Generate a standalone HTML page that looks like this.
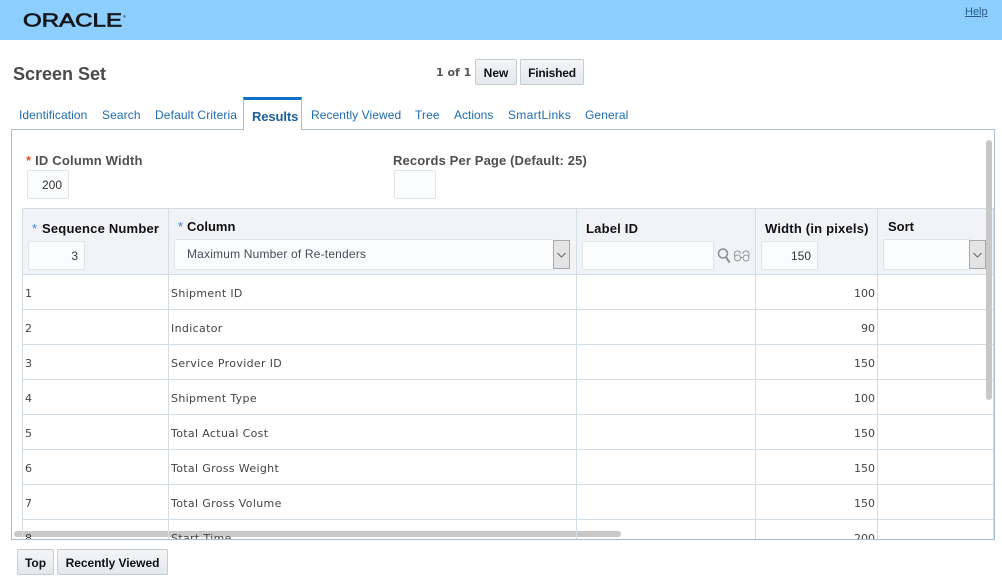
<!DOCTYPE html>
<html><head><meta charset="utf-8"><style>
html,body{margin:0;padding:0;width:1002px;height:579px;overflow:hidden;background:#fff;font-family:"Liberation Sans",Arial,sans-serif}
.a{position:absolute;white-space:nowrap}
.tab{position:absolute;top:108px;font-size:12px;line-height:15px;color:#1e6cb4;white-space:nowrap}
.btn{position:absolute;box-sizing:border-box;height:26px;line-height:26px;border:1px solid #c4ccd4;border-radius:2px;background:linear-gradient(#f4f5f7,#e4e8ec);font-size:12px;font-weight:bold;color:#111;text-align:center}
.lbl{font-size:13px;font-weight:bold;color:#4f4f4f;line-height:16px}
.inp{position:absolute;box-sizing:border-box;background:#fbfcfe;border:1px solid #e2e6ea;border-radius:2px;font-size:12px;color:#333;text-align:right;padding-right:6px;height:29px;line-height:28px}
.th{font-size:13px;font-weight:bold;color:#111;line-height:16px}
.star{color:#3b82e8;font-weight:normal}
.h{position:absolute;left:0;width:972px;height:1px;background:#d3dde6}
.v{position:absolute;width:1px;background:#d3dde6}
.c{position:absolute;font-family:"DejaVu Sans",Verdana,sans-serif;font-size:11px;line-height:14px;color:#444;white-space:nowrap}
.n{letter-spacing:.34px}
.sel{position:absolute;width:17px;height:29px;box-sizing:border-box;background:#e4e4e4;border:1px solid #a9a9a9}
</style></head><body>
<div class="a" style="left:0;top:0;width:1002px;height:40px;background:#8ccfff"></div>
<svg class="a" style="left:22px;top:10px" width="108" height="20"><text x="1" y="16.500" font-family="Liberation Sans" font-size="18.500" fill="#15161a" stroke="#15161a" stroke-width=".7" textLength="99" lengthAdjust="spacingAndGlyphs">ORACLE</text><text x="101" y="8" font-family="Liberation Sans" font-size="4" fill="#15161a">®</text></svg>
<div class="a" style="left:965px;top:6px;font-size:11px;line-height:13px;color:#2a5a8c;text-decoration:underline">Help</div>

<div class="a" style="left:13px;top:64px;font-size:18px;font-weight:bold;line-height:20px;color:#4a4a4a">Screen Set</div>
<div class="a" style="left:436px;top:66px;font-family:'DejaVu Sans',sans-serif;font-size:11px;font-weight:bold;line-height:14px;color:#555">1 of 1</div>
<div class="btn" style="left:475px;top:59px;width:42px">New</div>
<div class="btn" style="left:520px;top:59px;width:64px;letter-spacing:-.2px">Finished</div>

<div class="tab" style="left:19px;letter-spacing:.07px">Identification</div>
<div class="tab" style="left:102px;letter-spacing:.1px">Search</div>
<div class="tab" style="left:155px;letter-spacing:.13px">Default Criteria</div>
<div class="tab" style="left:311px;letter-spacing:.07px">Recently Viewed</div>
<div class="tab" style="left:415px;letter-spacing:.1px">Tree</div>
<div class="tab" style="left:454px">Actions</div>
<div class="tab" style="left:508px;letter-spacing:.3px">SmartLinks</div>
<div class="tab" style="left:585px;letter-spacing:.1px">General</div>

<div class="a" style="left:11px;top:129px;width:984px;height:411px;box-sizing:border-box;border:1px solid #a6bdd6;overflow:hidden;background:#fff">
  <div class="a lbl" style="left:14px;top:23px;letter-spacing:.2px"><span style="color:#e0532a">*</span> ID Column Width</div>
  <div class="inp" style="left:15px;top:40px;width:42px">200</div>
  <div class="a lbl" style="left:381px;top:23px;letter-spacing:.13px">Records Per Page (Default: 25)</div>
  <div class="inp" style="left:382px;top:40px;width:42px"></div>

  <div class="a" style="left:10px;top:78px;width:972px;height:67px;background:#f1f3f7"></div>
  <div class="a" style="left:2px;top:401px;width:607px;height:6px;border-radius:3px;background:#c8c8c8"></div>
  <div class="h" style="left:10px;top:78px"></div>
  <div class="h" style="left:10px;top:144px"></div>
  <div class="h" style="left:10px;top:179px"></div>
  <div class="h" style="left:10px;top:214px"></div>
  <div class="h" style="left:10px;top:249px"></div>
  <div class="h" style="left:10px;top:284px"></div>
  <div class="h" style="left:10px;top:319px"></div>
  <div class="h" style="left:10px;top:354px"></div>
  <div class="h" style="left:10px;top:389px"></div>
  <div class="v" style="left:10px;top:78px;height:331px"></div>
  <div class="v" style="left:156px;top:78px;height:331px"></div>
  <div class="v" style="left:564px;top:78px;height:331px"></div>
  <div class="v" style="left:743px;top:78px;height:331px"></div>
  <div class="v" style="left:865px;top:78px;height:331px"></div>
  <div class="v" style="left:981px;top:78px;height:331px"></div>

  <div class="a th" style="left:20px;top:91px"><span class="star">*</span><span style="position:absolute;left:10px;top:0;letter-spacing:.2px">Sequence Number</span></div>
  <div class="inp" style="left:16px;top:111px;width:57px">3</div>
  <div class="a th" style="left:166px;top:89px"><span class="star">*</span><span style="position:absolute;left:9px;top:0">Column</span></div>
  <div class="inp" style="left:162px;top:109px;width:380px;height:31px;text-align:left;padding-left:12px;line-height:29px;color:#4a4a5a;letter-spacing:.18px">Maximum Number of Re-tenders</div>
  <div class="sel" style="left:541px;top:110px"></div>
  <svg class="a" style="left:541px;top:110px" width="17" height="29"><path d="M4.500 13l4 4 4-4" fill="none" stroke="#666" stroke-width="1"/></svg>
  <div class="a th" style="left:574px;top:91px;letter-spacing:.2px">Label ID</div>
  <div class="inp" style="left:570px;top:111px;width:132px"></div>
  <svg class="a" style="left:703px;top:115px" width="38" height="20" fill="none" stroke="#8c8c8c">
    <circle cx="8" cy="8.500" r="4.500" stroke-width="1.500"/><path d="M11 12l3.500 5.500" stroke-width="2"/>
    <g stroke="#999"><circle cx="22.500" cy="13" r="3"/><circle cx="31" cy="13" r="3"/><path d="M25.500 12.500h2.500M19.500 11.500V9c0-2 1-3 3-3s3 1 3 3M34 11.500V9c0-2-1-3-3-3s-3 1-3 3"/></g>
  </svg>
  <div class="a th" style="left:753px;top:91px;letter-spacing:.2px">Width (in pixels)</div>
  <div class="inp" style="left:749px;top:111px;width:57px">150</div>
  <div class="a th" style="left:876px;top:89px">Sort</div>
  <div class="inp" style="left:871px;top:109px;width:88px;height:31px"></div>
  <div class="sel" style="left:957px;top:110px"></div>
  <svg class="a" style="left:957px;top:110px" width="17" height="29"><path d="M4.500 13l4 4 4-4" fill="none" stroke="#666" stroke-width="1"/></svg>

  <div class="c" style="left:13px;top:157px">1</div><div class="c n" style="left:159px;top:157px">Shipment ID</div><div class="c" style="right:119px;top:157px">100</div>
  <div class="c" style="left:13px;top:192px">2</div><div class="c n" style="left:159px;top:192px">Indicator</div><div class="c" style="right:119px;top:192px">90</div>
  <div class="c" style="left:13px;top:227px">3</div><div class="c n" style="left:159px;top:227px">Service Provider ID</div><div class="c" style="right:119px;top:227px">150</div>
  <div class="c" style="left:13px;top:262px">4</div><div class="c n" style="left:159px;top:262px">Shipment Type</div><div class="c" style="right:119px;top:262px">100</div>
  <div class="c" style="left:13px;top:297px">5</div><div class="c n" style="left:159px;top:297px">Total Actual Cost</div><div class="c" style="right:119px;top:297px">150</div>
  <div class="c" style="left:13px;top:332px">6</div><div class="c n" style="left:159px;top:332px">Total Gross Weight</div><div class="c" style="right:119px;top:332px">150</div>
  <div class="c" style="left:13px;top:367px">7</div><div class="c n" style="left:159px;top:367px">Total Gross Volume</div><div class="c" style="right:119px;top:367px">150</div>
  <div class="c" style="left:13px;top:402px">8</div><div class="c n" style="left:159px;top:402px">Start Time</div><div class="c" style="right:119px;top:402px">200</div>

  <div class="a" style="left:974px;top:10px;width:6px;height:260px;border-radius:3px;background:#c8c8c8"></div>
</div>

<div class="a" style="left:243px;top:97px;width:59px;height:33px;box-sizing:border-box;border:1px solid #a6bdd6;border-top:3px solid #0f6fc6;border-bottom:none;background:#fff"><span class="a" style="left:8px;top:9px;font-size:13px;font-weight:bold;line-height:16px;color:#1d5f9c;letter-spacing:-.1px">Results</span></div>

<div class="btn" style="left:17px;top:549px;width:37px">Top</div>
<div class="btn" style="left:57px;top:549px;width:111px;letter-spacing:-.05px">Recently Viewed</div>
</body></html>
